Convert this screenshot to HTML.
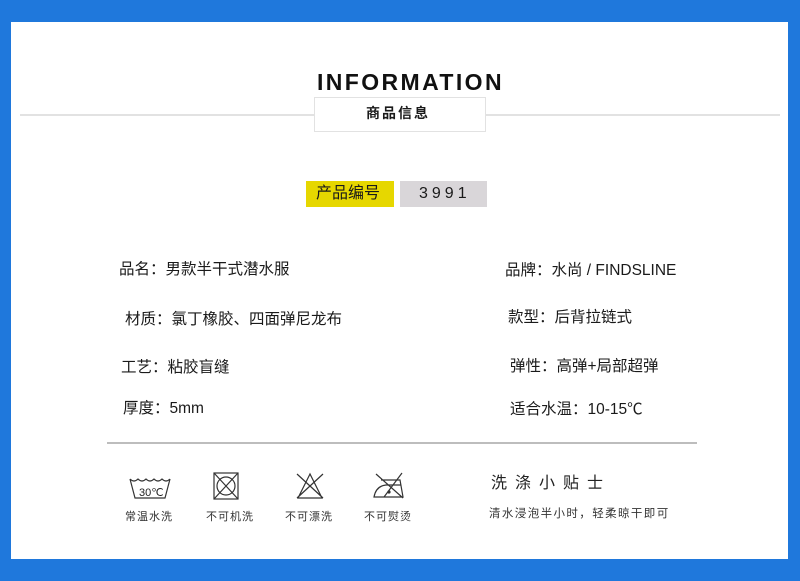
<!DOCTYPE html>
<html><head><meta charset="utf-8"><style>
body{margin:0;width:800px;height:581px;background:#1f78dc;position:relative;overflow:hidden;font-family:"Liberation Sans","Noto Sans CJK SC",sans-serif;color:#1a1a1a}
.w{position:absolute;left:11px;top:22px;width:777px;height:537px;background:#fff}
.a{position:absolute;white-space:nowrap;line-height:1}
.t{font-size:15.5px}
.ic{position:absolute}
</style></head><body>
<div class="w"></div>
<div class="a" style="left:317px;top:71px;font-size:23px;font-weight:bold;letter-spacing:2.4px;color:#111">INFORMATION</div>
<div style="position:absolute;left:20px;top:114px;width:760px;height:2px;background:#e2e2e2"></div>
<div style="position:absolute;left:314px;top:97px;width:170px;height:33px;border:1px solid #e2e2e2;background:#fff"></div>
<div class="a" style="left:366px;top:106px;font-size:14px;font-weight:bold;letter-spacing:2px">商品信息</div>
<div style="position:absolute;left:306px;top:181px;width:88px;height:26px;background:#e6d700"></div>
<div class="a" style="left:316px;top:186px;font-size:16px">产品编号</div>
<div style="position:absolute;left:400px;top:181px;width:87px;height:26px;background:#d9d6d9"></div>
<div class="a" style="left:419px;top:186px;font-size:16px;letter-spacing:4px">3991</div>

<div class="a t" style="left:119px;top:262px">品名：男款半干式潜水服</div>
<div class="a t" style="left:125px;top:312px">材质：氯丁橡胶、四面弹尼龙布</div>
<div class="a t" style="left:121px;top:360px">工艺：粘胶盲缝</div>
<div class="a t" style="left:123px;top:401px">厚度：5mm</div>
<div class="a t" style="left:505px;top:263px">品牌：水尚 / FINDSLINE</div>
<div class="a t" style="left:508px;top:310px">款型：后背拉链式</div>
<div class="a t" style="left:510px;top:359px">弹性：高弹+局部超弹</div>
<div class="a t" style="left:510px;top:402px">适合水温：10-15℃</div>

<div style="position:absolute;left:107px;top:442px;width:590px;height:2px;background:#bdbdbd"></div>

<svg class="ic" style="left:128px;top:476px" width="44" height="26" viewBox="0 0 44 26" fill="none" stroke="#333" stroke-width="1.2"><path d="M2 3 L7 22 H37 L42 3 M2 3 Q6 7 10 3 Q14 7 18 3 Q22 7 26 3 Q30 7 34 3 Q38 7 42 3"/><text x="11" y="20" font-size="11" stroke="none" fill="#222" font-family="Liberation Sans">30℃</text></svg>
<svg class="ic" style="left:213px;top:472px" width="26" height="28" viewBox="0 0 26 28" fill="none" stroke="#333" stroke-width="1.2"><rect x="1" y="1" width="24" height="26"/><circle cx="13" cy="14" r="9"/><path d="M1 1 L25 27 M25 1 L1 27"/></svg>
<svg class="ic" style="left:295px;top:472px" width="30" height="28" viewBox="0 0 30 28" fill="none" stroke="#333" stroke-width="1.2"><path d="M15 2 L3 26 H27 Z M2 2 L28 26 M28 2 L2 26"/></svg>
<svg class="ic" style="left:372px;top:472px" width="34" height="28" viewBox="0 0 34 28" fill="none" stroke="#333" stroke-width="1.2"><path d="M9 8 H28 L31 25 H2 Q4 14 14 13 H29 M4 2 L31 26 M30 1 L12 25"/><circle cx="17" cy="20" r="1" fill="#333"/></svg>
<div class="a" style="left:125px;top:512px;font-size:11px;letter-spacing:1px;color:#333">常温水洗</div>
<div class="a" style="left:206px;top:512px;font-size:11px;letter-spacing:1px;color:#333">不可机洗</div>
<div class="a" style="left:285px;top:512px;font-size:11px;letter-spacing:1px;color:#333">不可漂洗</div>
<div class="a" style="left:364px;top:512px;font-size:11px;letter-spacing:1px;color:#333">不可熨烫</div>
<div class="a" style="left:491px;top:476px;font-size:16px;letter-spacing:8px;color:#222">洗涤小贴士</div>
<div class="a" style="left:489px;top:509px;font-size:11.5px;letter-spacing:1.4px;color:#333">清水浸泡半小时，轻柔晾干即可</div>
</body></html>
